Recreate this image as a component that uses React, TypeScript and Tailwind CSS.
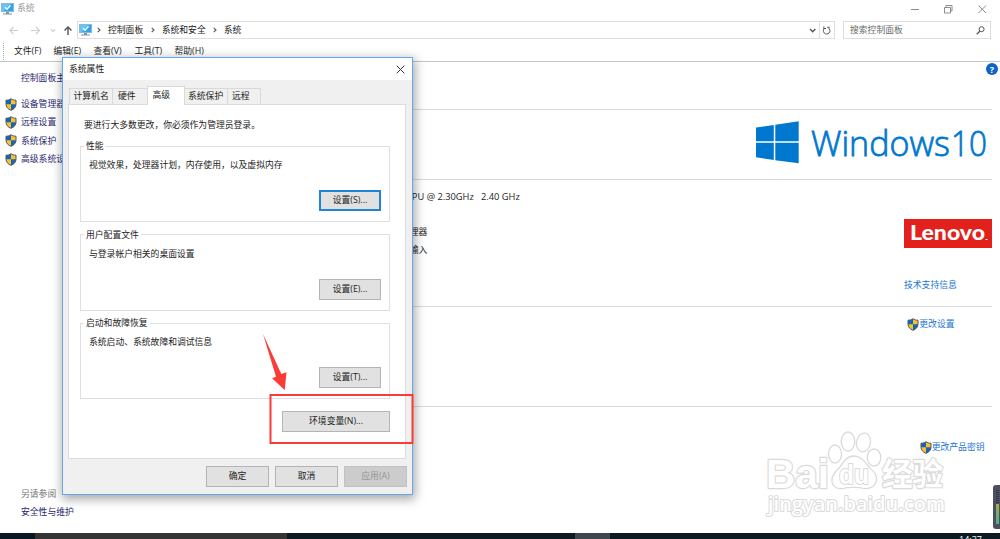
import type { ReactNode } from "react";

function Shield({ className = "" }: { className?: string }) {
  return (
    <svg className={`shrink-0 ${className}`} width="12" height="13" viewBox="0 0 12 13">
      <path d="M6 .7C4.600 1.800 2.800 2.200 1 2.200V6.200C1 9 3 11.200 6 12.300 9 11.200 11 9 11 6.200V2.200C9.200 2.200 7.400 1.800 6 .7Z" fill="#fbc02d" />
      <path d="M6 .7C4.600 1.800 2.800 2.200 1 2.200V6.300H6ZM6 6.300H11C10.900 9.100 9 11.200 6 12.300Z" fill="#1366c0" />
      <path d="M6 .7C4.600 1.800 2.800 2.200 1 2.200V6.200C1 9 3 11.200 6 12.300 9 11.200 11 9 11 6.200V2.200C9.200 2.200 7.400 1.800 6 .7Z" fill="none" stroke="#4b5660" strokeWidth="1" />
    </svg>
  );
}

function Monitor() {
  return (
    <svg className="shrink-0" width="13" height="12" viewBox="0 0 13 12">
      <rect x=".5" y=".5" width="12" height="8" fill="#2fa4e7" stroke="#86b9dc" />
      <path d="M1 1H9L3 8H1Z" fill="#66c3f5" />
      <path d="M4 4.300 6 6.300 9.500 2.300" stroke="#fff" strokeWidth="1.400" fill="none" />
      <path d="M5 9H8V10.500H11V11.500H2V10.500H5Z" fill="#7d97a8" />
    </svg>
  );
}

function Crumb({ children, className = "" }: { children: ReactNode; className?: string }) {
  return (
    <div className={`flex items-center ${className}`}>
      <svg width="4" height="6" viewBox="0 0 4 6" className="mr-[7px]">
        <path d="M.7.800 3 3 .7 5.200" fill="none" stroke="#555" strokeWidth="1.100" />
      </svg>
      <span>{children}</span>
    </div>
  );
}

function Task({ children }: { children: ReactNode }) {
  return (
    <div className="flex h-[18.4px] items-center whitespace-nowrap pl-[5px]">
      <Shield className="mr-[4px]" />
      {children}
    </div>
  );
}

function Button({ children, className = "" }: { children: ReactNode; className?: string }) {
  return (
    <button className={`flex h-[21px] shrink-0 items-center justify-center border ${className}`}>{children}</button>
  );
}

function Group({ title, text, children, className = "" }: { title: string; text: string; children: ReactNode; className?: string }) {
  return (
    <fieldset className={`ml-[11px] h-[82px] w-[310px] border border-[#dfdfdf] ${className}`}>
      <legend className="ml-[3px] h-[12px] px-[2px] leading-[12px]">{title}</legend>
      <p className="ml-[8px] mt-[6px] h-[14px] leading-[14px]">{text}</p>
      <div className="mt-[18px] flex justify-end pr-[8px]">{children}</div>
    </fieldset>
  );
}

function Dialog() {
  return (
    <section className="absolute left-[62px] top-[57px] flex h-[438px] w-[351px] flex-col border border-[#62a8ee] bg-[#f0f0f0] text-[#222] shadow-[1px_3px_10px_1px_rgba(0,0,0,0.36)]">
      <header className="flex h-[22px] shrink-0 items-center justify-between bg-white pl-[6px] pr-[7px]">
        <span>系统属性</span>
        <svg width="9" height="9" viewBox="0 0 9 9">
          <path d="M.7.700 8.300 8.300M8.300.700.7 8.300" stroke="#333" strokeWidth="1" />
        </svg>
      </header>
      <nav className="ml-[6px] mt-[6px] flex h-[18px] shrink-0 items-end">
        <span className="flex h-[16px] w-[44px] items-center border border-b-0 border-[#d9d9d9] pl-[3.500px]">计算机名</span>
        <span className="flex h-[16px] w-[34px] items-center border-t border-[#d9d9d9] pl-[5px]">硬件</span>
        <span className="z-10 -mb-px flex h-[19px] w-[38px] items-center border border-b-0 border-[#d9d9d9] bg-white pb-[2px] pl-[4.500px]">高级</span>
        <span className="flex h-[16px] w-[43px] items-center border-r border-t border-[#d9d9d9] pl-[3px]">系统保护</span>
        <span className="flex h-[16px] w-[33px] items-center border-r border-t border-[#d9d9d9] pl-[4px]">远程</span>
      </nav>
      <div className="ml-[5px] flex h-[355px] w-[338px] shrink-0 flex-col border border-[#dcdcdc] bg-white">
        <p className="ml-[15px] mt-[13px] h-[14px] leading-[14px]">要进行大多数更改，你必须作为管理员登录。</p>
        <Group title="性能" text="视觉效果，处理器计划，内存使用，以及虚拟内存" className="mt-[8px]">
          <Button className="w-[62px] border-2 border-[#1f83d8] bg-[#e1e1e1]">设置(S)...</Button>
        </Group>
        <Group title="用户配置文件" text="与登录帐户相关的桌面设置" className="mt-[6.500px]">
          <Button className="w-[62px] border-[#b4b4b4] bg-[#e1e1e1]">设置(E)...</Button>
        </Group>
        <Group title="启动和故障恢复" text="系统启动、系统故障和调试信息" className="mt-[6.500px]">
          <Button className="w-[62px] border-[#b4b4b4] bg-[#e1e1e1]">设置(T)...</Button>
        </Group>
        <div className="mt-[12px] flex justify-end pr-[15px]">
          <Button className="w-[108px] border-[#b4b4b4] bg-[#e1e1e1]">环境变量(N)...</Button>
        </div>
      </div>
      <footer className="mt-[7px] flex justify-end gap-[6px] pr-[5px]">
        <Button className="w-[63px] border-[#b4b4b4] bg-[#e1e1e1]">确定</Button>
        <Button className="w-[63px] border-[#b4b4b4] bg-[#e1e1e1]">取消</Button>
        <Button className="w-[63px] border-[#c2c2c2] bg-[#cccccc] text-[#969696]">应用(A)</Button>
      </footer>
    </section>
  );
}

function Watermark() {
  return (
    <svg className="absolute left-[760px] top-[425px]" width="195" height="100" viewBox="0 0 195 100" fill="#fff" stroke="#dadada" strokeWidth="1.300" strokeLinejoin="round">
      <text x="6" y="63" fontFamily="Liberation Sans" fontWeight="700" fontSize="41" textLength="63" lengthAdjust="spacingAndGlyphs" strokeWidth="2.400" paintOrder="stroke">Bai</text>
      <ellipse cx="75" cy="29" rx="6.500" ry="9" />
      <ellipse cx="88" cy="16.500" rx="6.800" ry="9.500" />
      <ellipse cx="103.500" cy="17.500" rx="7" ry="9.500" transform="rotate(10 103.500 17.500)" />
      <ellipse cx="114" cy="32.500" rx="6.800" ry="8.500" />
      <path d="M94 31C87 31 84 36 80 42 75 47 71 51 72 57 73 63 78 64 83 63.500 88 62 99 62 104 63.500 110 64 116 61 116.500 55 117 49 113 46 109 42 104 36 101 31 94 31Z" />
      <text x="79" y="58.500" fontFamily="Liberation Sans" fontWeight="700" fontSize="27" textLength="30" lengthAdjust="spacingAndGlyphs" strokeWidth="2" paintOrder="stroke">du</text>
      <text x="122" y="60" fontFamily="Noto Sans CJK SC" fontWeight="700" fontSize="31" textLength="61" lengthAdjust="spacingAndGlyphs" strokeWidth="2.400" paintOrder="stroke">经验</text>
      <text x="8" y="86" fontFamily="Open Sans" fontWeight="600" fontSize="20" textLength="177" lengthAdjust="spacingAndGlyphs" strokeWidth="2" paintOrder="stroke">jingyan.baidu.com</text>
    </svg>
  );
}

export default function App() {
  return (
    <div className="relative flex h-[539px] w-[1000px] flex-col overflow-hidden bg-white font-['Open_Sans','Noto_Sans_CJK_SC',sans-serif] text-[8.800px] leading-none text-[#222]">
      <header className="flex h-[17px] shrink-0 items-center pl-px text-[#999]">
        <Monitor />
        <span className="ml-[3px]">系统</span>
        <svg className="ml-auto mr-[13px]" width="78" height="10" viewBox="0 0 78 10" fill="none" stroke="#8c8c8c" strokeWidth="1">
          <path d="M2 5.500H10M69.500 1.500 77 9M77 1.500 69.500 9" />
          <path d="M35.500 3.500H41.500V9H35.500ZM37 3.500V1.500H43V7H41.500" />
        </svg>
      </header>
      <div className="flex h-[25px] shrink-0 items-center pt-px">
        <svg className="shrink-0" width="77" height="14" viewBox="0 0 77 14" fill="none" strokeWidth="1.200">
          <path d="M10 7.500H18M13.500 4 10 7.500 13.500 11M31 7.500H39.500M36 4 39.500 7.500 36 11M51 6.500 53 8.500 55 6.500" stroke="#cfcfcf" />
          <path d="M68 12V4M64.500 7.500 68 4 71.500 7.500" stroke="#555" strokeWidth="1.400" />
        </svg>
        <div className="flex h-[18px] w-[758px] items-center border border-[#dedede] pl-[1px]">
          <Monitor />
          <Crumb className="ml-[5px]">控制面板</Crumb>
          <Crumb className="ml-[7.500px]">系统和安全</Crumb>
          <Crumb className="ml-[7px]">系统</Crumb>
          <svg className="ml-auto" width="26" height="16" viewBox="0 0 26 16" fill="none">
            <path d="M2 7 4.700 9.700 7.400 7" stroke="#555" strokeWidth="1.400" />
            <path d="M11.500 0V16" stroke="#dedede" />
            <path d="M16.800 6A3.300 3.300 0 1 0 20.500 6M15.800 4.500V6.500H18M19.200 5.300H21.700" stroke="#555" strokeWidth="1" />
          </svg>
        </div>
        <div className="ml-[8px] flex h-[18px] w-[148px] items-center justify-between border border-[#dedede] pl-[6px] pr-[5px] text-[#6b6b6b]">
          搜索控制面板
          <svg width="9" height="9" viewBox="0 0 9 9" fill="none" stroke="#555">
            <circle cx="5.600" cy="3.200" r="2.500" />
            <path d="M3.800 5.200.700 8.200" strokeWidth="1.300" />
          </svg>
        </div>
      </div>
      <nav className="flex h-[20px] shrink-0 items-center border-b border-[#c4c4c4] pb-px">
        <div className="ml-[3px] h-[17px] border-l border-dotted border-[#aaa]" />
        <span className="ml-[10px] w-[39.500px]">文件(F)</span>
        <span className="w-[40px]">编辑(E)</span>
        <span className="w-[41px]">查看(V)</span>
        <span className="w-[40px]">工具(T)</span>
        <span>帮助(H)</span>
      </nav>
      <div className="flex h-[471px] shrink-0">
        <aside className="flex w-[138px] flex-col text-[#28286e]">
          <div className="ml-[21px] mt-[9px] h-[14px] leading-[14px]">控制面板主页</div>
          <div className="mt-[10px]">
            <Task>设备管理器</Task>
            <Task>远程设置</Task>
            <Task>系统保护</Task>
            <Task>高级系统设置</Task>
          </div>
          <div className="ml-[21px] mt-auto h-[18px] leading-[18px] text-[#777]">另请参阅</div>
          <div className="mb-[12px] ml-[21px] h-[18px] leading-[18px]">安全性与维护</div>
        </aside>
        <main className="flex flex-1 flex-col pl-[240px]">
          <div className="mr-[8px] flex h-[48px] shrink-0 justify-end border-b border-[#dadada]">
            <span className="-mr-[6px] mt-[1px] flex h-[12px] w-[12px] items-center justify-center rounded-full bg-[#0d62c4] text-[9px] font-bold text-white">?</span>
          </div>
          <div className="mr-[8px] flex h-[70px] shrink-0 justify-end border-b border-[#dadada]">
            <svg width="236" height="60" viewBox="0 0 236 60">
              <path d="M0 17.500 17.800 15V31.200H0ZM19.300 14.700 42.700 11.300V31.200H19.300ZM0 32.800H17.800V50L0 47.300ZM19.300 32.800H42.700V53.300L19.300 50.200Z" fill="#0078cf" />
              <text x="55" y="46" fill="#0078cf" fontFamily="Open Sans" fontWeight="300" fontSize="35" stroke="#0078cf" strokeWidth=".8" textLength="139" lengthAdjust="spacingAndGlyphs">Windows</text>
              <text x="195" y="46" fill="#0078cf" fontFamily="Open Sans" fontWeight="300" fontSize="35" stroke="#0078cf" strokeWidth=".8" textLength="36" lengthAdjust="spacingAndGlyphs">10</text>
            </svg>
          </div>
          <div className="mr-[8px] flex h-[127px] shrink-0 justify-between border-b border-[#dadada]">
            <div className="ml-[28px] pt-[8px] text-[9.300px]">
              <div className="h-[18px] whitespace-pre leading-[18px]">{"CPU @ 2.30GHz   2.40 GHz"}</div>
              <div className="-ml-[5px] mt-[17px] h-[18px] text-[8.800px] leading-[18px]">处理器</div>
              <div className="-ml-[5px] h-[18px] text-[8.800px] leading-[18px]">笔输入</div>
            </div>
            <div className="flex w-[88px] flex-col pt-[38px]">
              <svg width="88" height="30" viewBox="0 0 88 30">
                <rect y="1" width="88" height="29" fill="#e2211c" />
                <text x="6" y="22" fill="#fff" fontFamily="Lato" fontWeight="900" fontSize="21" textLength="75" lengthAdjust="spacingAndGlyphs">Lenovo</text>
                <path d="M81.500 21.500H83.500" stroke="#fff" />
              </svg>
              <a className="mt-[30px] h-[14px] leading-[14px] text-[#1874d2]">技术支持信息</a>
            </div>
          </div>
          <div className="mr-[8px] flex h-[100px] shrink-0 justify-end border-b border-[#dadada]">
            <a className="mr-[37.500px] mt-[10px] flex h-[14px] items-center text-[#1874d2]"><Shield />更改设置</a>
          </div>
          <div className="mr-[15.500px] flex justify-end">
            <a className="mt-[33px] flex h-[14px] items-center text-[#1874d2]"><Shield />更改产品密钥</a>
          </div>
        </main>
      </div>
      <footer className="flex h-[6px] shrink-0 overflow-hidden bg-[#0d1a22]">
        <div className="w-[35px] bg-[#091722]" />
        <div className="w-[252px] bg-[#343434]" />
        <div className="ml-[288px] w-[35px] bg-[#3f474d]" />
        <span className="ml-auto mr-[18px] mt-[2px] text-[9px] text-white">14:37</span>
      </footer>
      <Watermark />
      <Dialog />
      <svg className="absolute left-[255px] top-[325px]" width="165" height="125" viewBox="255 325 165 125">
        <path d="M263 334 281.300 374 286.500 372.300 284.700 390 272 378.300 276 376.700Z" fill="#fb3b36" />
        <rect x="270.500" y="395" width="142" height="48" fill="none" stroke="#fb3b36" strokeWidth="2" />
      </svg>
      <div className="absolute left-[993px] top-[485px] flex h-[44px] w-[9px] flex-col rounded-[3px] bg-[#4b4f60] pl-[3px] pt-[5px]">
        <div className="h-[14px] w-[3px] bg-[repeating-linear-gradient(#343847_0_1px,#4b4f60_1px_2px)]" />
        <div className="h-[20px] w-[3px] bg-[linear-gradient(#a8ad4b,#4fae91)]" />
      </div>
    </div>
  );
}
